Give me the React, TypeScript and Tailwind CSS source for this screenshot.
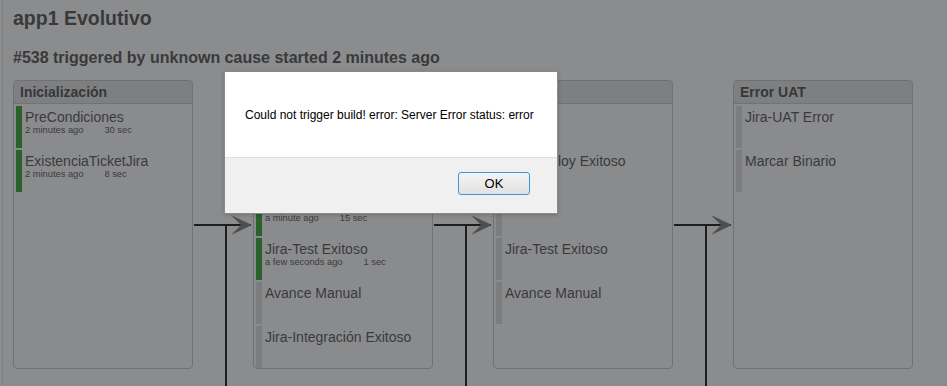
import React from "react";

type Job = { name: string; status: "ok" | "idle"; time?: string; dur?: string };
type Stage = { title: string; jobs: Job[] };

const stages: Stage[] = [
  {
    title: "Inicialización",
    jobs: [
      { name: "PreCondiciones", status: "ok", time: "2 minutes ago", dur: "30 sec" },
      { name: "ExistenciaTicketJira", status: "ok", time: "2 minutes ago", dur: "8 sec" },
    ],
  },
  {
    title: "Test",
    jobs: [
      { name: "Deploy Test", status: "ok", time: "a minute ago", dur: "20 sec" },
      { name: "Jira-Deploy Exitoso", status: "ok", time: "a minute ago", dur: "2 sec" },
      { name: "Pruebas Test", status: "ok", time: "a minute ago", dur: "15 sec" },
      { name: "Jira-Test Exitoso", status: "ok", time: "a few seconds ago", dur: "1 sec" },
      { name: "Avance Manual", status: "idle" },
      { name: "Jira-Integración Exitoso", status: "idle" },
    ],
  },
  {
    title: "UAT",
    jobs: [
      { name: "Deploy", status: "idle" },
      { name: "Jira-Deploy Exitoso", status: "idle" },
      { name: "Tests", status: "idle" },
      { name: "Jira-Test Exitoso", status: "idle" },
      { name: "Avance Manual", status: "idle" },
    ],
  },
  {
    title: "Error UAT",
    jobs: [
      { name: "Jira-UAT Error", status: "idle" },
      { name: "Marcar Binario", status: "idle" },
    ],
  },
];

function JobRow({ job }: { job: Job }) {
  return (
    <div className="flex h-[42px] gap-[3px]">
      <div
        className={
          job.status === "ok" ? "w-[6px] shrink-0 bg-[#2a612d]" : "w-[6px] shrink-0 bg-[#7b7c7e]"
        }
      />
      <div className="flex flex-col pt-[3px] min-w-0">
        <div className="text-[14px] leading-[16px] text-[#3a3a3c] whitespace-nowrap">{job.name}</div>
        {job.time && (
          <div className="text-[9.3px] leading-[11px] text-[#3a3a3c] whitespace-nowrap">
            <span>{job.time}</span>
            <span className="ml-[21px]">{job.dur}</span>
          </div>
        )}
      </div>
    </div>
  );
}

function StagePanel({ stage }: { stage: Stage }) {
  return (
    <div className="w-[180px] shrink-0 rounded-[4px] border border-[#707173] bg-[#8a8b8d] flex flex-col overflow-hidden">
      <div className="h-[23px] border-b border-[#717274] bg-[#7e7f81] pl-[6px] flex items-center">
        <span className="text-[14px] font-bold leading-[16px] text-[#373738]">{stage.title}</span>
      </div>
      <div className="flex flex-col gap-[2px] pt-[2px] px-[2px]">
        {stage.jobs.map((j, i) => (
          <JobRow key={i} job={j} />
        ))}
      </div>
    </div>
  );
}

function Connector() {
  return (
    <div className="relative w-[60px] shrink-0 self-stretch">
      <svg
        className="absolute left-0 top-0 overflow-visible"
        width="60"
        height="306"
        viewBox="0 0 60 306"
      >
        <rect x="1" y="144" width="57" height="2" fill="#1e1e1f" />
        <rect x="32" y="145" width="2" height="170" fill="#1e1e1f" />
        <polygon points="38,135 59,145 38,155 48,145" fill="#4e4f51" />
      </svg>
    </div>
  );
}

export default function App() {
  return (
    <div
      className="relative h-[386px] w-[947px] overflow-hidden bg-[#8b8c8e]"
      style={{ fontFamily: '"Liberation Sans", Arial, sans-serif' }}
    >
      <div className="ml-[2px] h-full border-l border-[#7d7e80] pl-[10px] pt-[6px]">
        <h1 className="text-[19.5px] font-bold leading-[24px] text-[#393939]">app1 Evolutivo</h1>
        <h2 className="mt-[18px] text-[16px] font-bold leading-[20px] text-[#393939]">
          #538 triggered by unknown cause started 2 minutes ago
        </h2>
        <div className="mt-[12px] flex items-stretch">
          {stages.map((s, i) => (
            <React.Fragment key={i}>
              {i > 0 && <Connector />}
              <StagePanel stage={s} />
            </React.Fragment>
          ))}
        </div>
      </div>

      <div className="absolute left-[224px] top-[71px] w-[334px] border border-[#8a8a8a] bg-white shadow-[0_1px_4px_rgba(0,0,0,0.2)]">
        <div className="flex h-[85px] items-center pl-[20px]">
          <span className="text-[12px] leading-[14px] text-black">
            Could not trigger build! error: Server Error status: error
          </span>
        </div>
        <div className="flex h-[56px] justify-end border-t border-[#dfdfdf] bg-[#f0f0f0] pr-[27px] pt-[14px]">
          <button className="h-[23px] w-[72px] rounded-[3px] border border-[#3a9ad9] bg-gradient-to-b from-[#f4f4f4] to-[#e1e1e1] text-[13px] leading-[15px] text-black">
            OK
          </button>
        </div>
      </div>
    </div>
  );
}
